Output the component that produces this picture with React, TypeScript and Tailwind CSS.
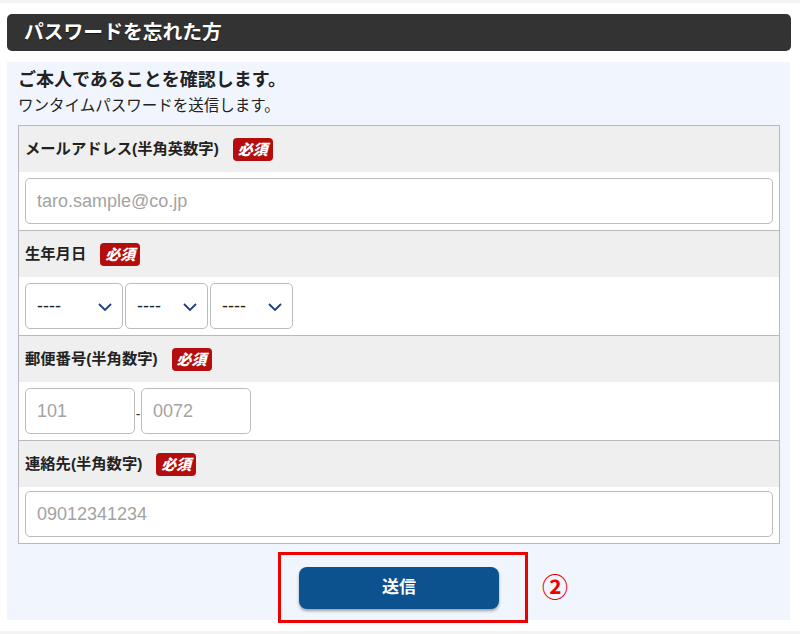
import React from 'react';

const Badge = () => (
  <span className="ml-[14px] inline-flex h-[23px] items-center rounded-[4px] bg-[#b30d0d] px-[5px] text-[15px] font-black italic leading-none text-white">
    必須
  </span>
);

const Label = ({ text }: { text: string }) => (
  <div className="flex h-[46px] items-center bg-[#efefef] px-[6px] text-[15.3px] font-bold text-[#222]">
    <span>{text}</span>
    <Badge />
  </div>
);

const Chevron = () => (
  <svg width="14" height="8" viewBox="0 0 14 8" className="pointer-events-none absolute right-[11px] top-[20px]">
    <path d="M1 1 L7 7 L13 1" fill="none" stroke="#1d3f7f" strokeWidth="1.8" />
  </svg>
);

const DateSelect = ({ width }: { width: string }) => (
  <div className={`relative ${width}`}>
    <select className="h-[46px] w-full appearance-none rounded-[5px] border border-[#bcbcbc] bg-white pl-[11px] text-[18px] text-[#222] outline-none">
      <option>----</option>
    </select>
    <Chevron />
  </div>
);

const inputCls =
  'h-[46px] rounded-[5px] border border-[#bcbcbc] bg-white px-[11px] text-[18px] text-[#222] outline-none placeholder:text-[#a3a3a3]';

export default function App() {
  return (
    <div className="relative h-[634px] w-[800px] overflow-hidden bg-white font-['Liberation_Sans','Noto_Sans_CJK_JP',sans-serif]">
      <div className="h-[3px] bg-[#f3f3f3]" />

      <div className="ml-[7px] mt-[11px] flex h-[37px] w-[784px] items-center rounded-[5px] bg-[#333333] pl-[17px] text-[19.8px] font-bold text-white [text-shadow:0_1px_1px_rgba(0,0,0,0.6)]">
        パスワードを忘れた方
      </div>

      <div className="ml-[7px] mt-[11px] w-[783px] bg-[#f1f6fe] pb-[11px] pl-[11px] pr-[10px] pt-[6px]">
        <h2 className="text-[18px] font-bold leading-[24px] text-[#222]">ご本人であることを確認します。</h2>
        <p className="mt-[4px] text-[15.5px] leading-[20px] text-[#222]">ワンタイムパスワードを送信します。</p>

        <div className="mt-[9px] border border-[#b9b9b9]">
          <Label text="メールアドレス(半角英数字)" />
          <div className="border-b border-[#b9b9b9] bg-white px-[6px] py-[6px]">
            <input className={`${inputCls} w-full`} placeholder="taro.sample@co.jp" />
          </div>

          <Label text="生年月日" />
          <div className="flex gap-[2px] border-b border-[#b9b9b9] bg-white px-[6px] py-[6px]">
            <DateSelect width="w-[98px]" />
            <DateSelect width="w-[83px]" />
            <DateSelect width="w-[83px]" />
          </div>

          <Label text="郵便番号(半角数字)" />
          <div className="flex items-center border-b border-[#b9b9b9] bg-white px-[6px] py-[6px]">
            <input className={`${inputCls} w-[110px]`} placeholder="101" />
            <span className="mt-[6px] w-[6px] text-center text-[14px] text-[#333]">-</span>
            <input className={`${inputCls} w-[110px]`} placeholder="0072" />
          </div>

          <Label text="連絡先(半角数字)" />
          <div className="bg-white px-[6px] pb-[6px] pt-[4px]">
            <input className={`${inputCls} w-full`} placeholder="09012341234" />
          </div>
        </div>

        <div className="flex justify-center pt-[23px]">
          <div className="relative">
            <button className="h-[42px] w-[200px] rounded-[8px] bg-[#0b528e] text-[17px] font-bold text-white shadow-[0_2px_3px_rgba(0,0,0,0.35)]">
              送信
            </button>
            <div className="pointer-events-none absolute left-[-21px] top-[-15px] h-[71px] w-[250px] border-[3px] border-[#ee0000]" />
            <span className="absolute left-[243px] top-[8px] text-[26px] font-bold leading-none text-[#ee0000]">②</span>
          </div>
        </div>
      </div>

      <div className="absolute bottom-0 left-0 h-[3px] w-full bg-[#f3f3f3]" />
    </div>
  );
}
